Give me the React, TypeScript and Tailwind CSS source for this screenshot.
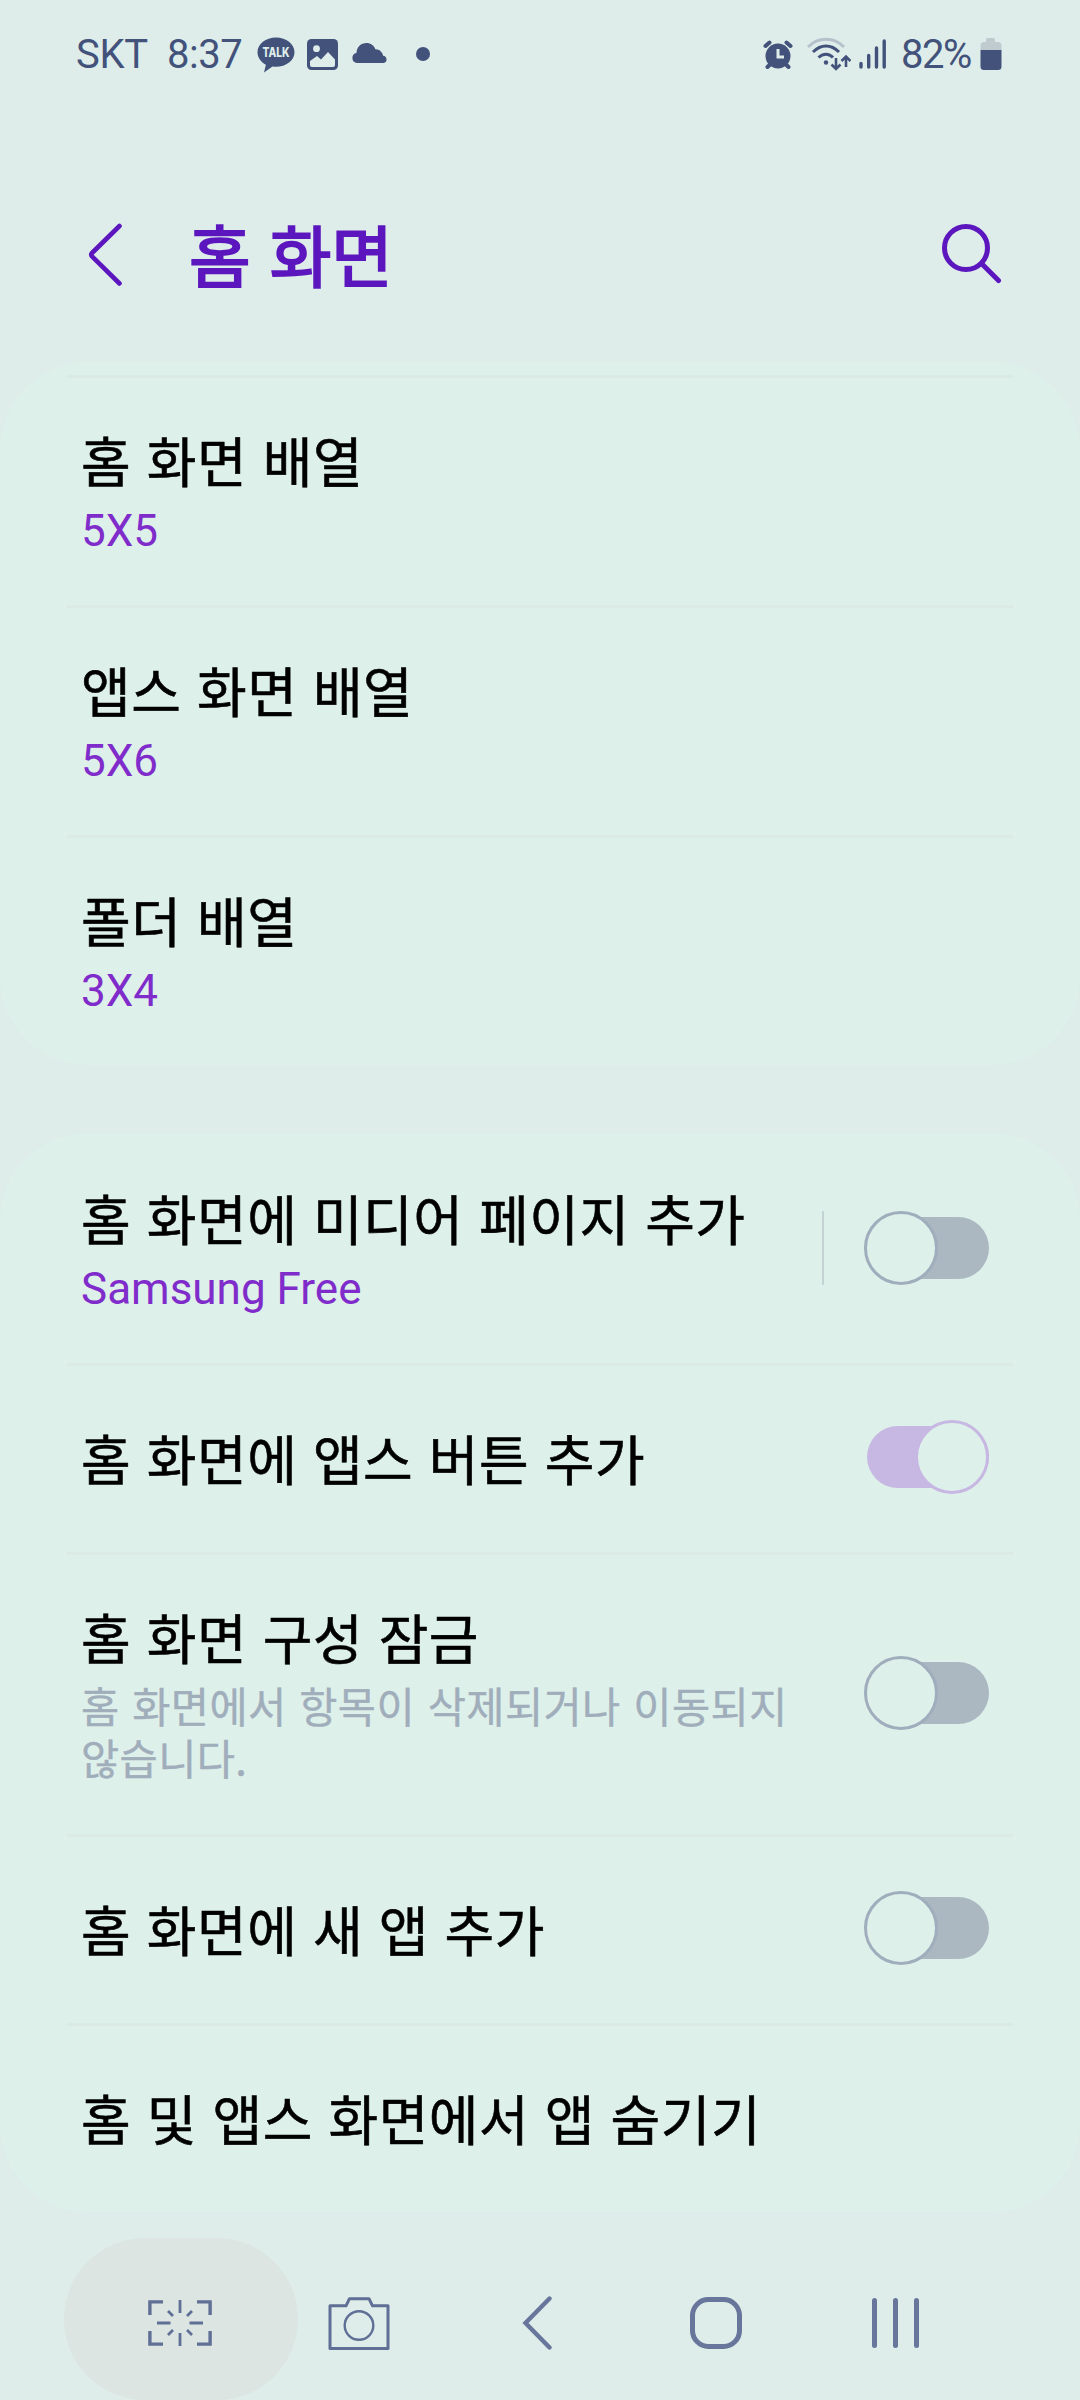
import type { ReactNode } from "react";

function StatusBar() {
  return (
    <div className="flex h-[108px] items-center pl-[76px] pr-[78px] font-['Roboto'] text-[40px] leading-[40px] font-normal text-[#42527a]">
      <span className="mt-[2px] w-[91px] whitespace-nowrap tracking-[-0.3px]">SKT</span>
      <span className="mt-[2px] w-[90px] whitespace-nowrap tracking-[-0.5px]">8:37</span>
      <svg className="mt-[1px] h-[36px] w-[38px]" viewBox="0 0 38 36">
        <path
          d="M19 0.5C8.800 .5.500 7 .5 15.200c0 5.300 3.500 9.900 8.400 12.500L7 35.500l8.500-6c1.100.2 2.300.3 3.500.3 10.200 0 18.500-6.500 18.500-14.600S29.200.5 19 .5z"
          fill="#42527a"
        />
        <text x="19" y="20.300" textAnchor="middle" fontFamily="Inter" fontWeight="800" fontSize="12.500" textLength="27" lengthAdjust="spacingAndGlyphs" fill="#deedea">
          TALK
        </text>
      </svg>
      <svg className="ml-[12px] h-[31px] w-[31px]" viewBox="0 0 31 31">
        <rect width="31" height="31" rx="4.500" fill="#42527a" />
        <circle cx="9.500" cy="9.700" r="3.400" fill="#deedea" />
        <path d="M3 22l7-5 4 3.500 7-7.500 7 7.500V26a2 2 0 0 1-2 2H5a2 2 0 0 1-2-2z" fill="#deedea" />
      </svg>
      <svg className="ml-[14px] mt-[-3px] h-[20px] w-[36px]" viewBox="0 0 36 20">
        <path d="M5 20a5 5 0 0 1-.5-9.900C4.500 4 9 0 14.500 0c4.200 0 7.400 2.300 8.800 6.200 4-.2 7.200 2.800 7.800 6.600A3.700 3.700 0 0 1 32 20z" fill="#42527a" />
      </svg>
      <span className="ml-[28px] h-[14px] w-[14px] rounded-full bg-[#42527a]" />
      <svg className="ml-auto h-[29px] w-[30px]" viewBox="0 0 30 29">
        <g stroke="#42527a" strokeWidth="4" strokeLinecap="round">
          <path d="M2.500 6l4-3.500M27.500 6l-4-3.500M4.500 27l3-3M25.500 27l-3-3" />
        </g>
        <circle cx="15" cy="16" r="12.500" fill="#42527a" />
        <path d="M15 9v8h6" fill="none" stroke="#deedea" strokeWidth="3" />
      </svg>
      <svg className="ml-[14px] h-[34px] w-[44px]" viewBox="0 0 44 34">
        <g fill="none" strokeWidth="3">
          <path d="M1 10C11 -.5 27 -.5 37 10" stroke="#b5c1cb" />
          <path d="M6 15C14 7 24 7 32 15" stroke="#42527a" />
          <path d="M11.500 20.500C16 16 22 16 26 20.500" stroke="#42527a" />
          <path d="M29 21v10M24.500 27.500l4.500 4.500 4.500-4.500M39 30V20M34.500 24l4.500-4.500 4.500 4.500" stroke="#42527a" strokeWidth="2.600" />
        </g>
        <circle cx="19" cy="25.500" r="2.200" fill="#42527a" />
      </svg>
      <svg className="ml-[8px] h-[30px] w-[28px]" viewBox="0 0 28 30">
        <path d="M2 24.500V28M9.700 16.500V28M17.500 9V28M25.200 2V28" stroke="#42527a" strokeWidth="3.400" strokeLinecap="round" />
      </svg>
      <span className="mt-[2px] ml-[14px] w-[73px] whitespace-nowrap tracking-[-1.500px]">82%</span>
      <svg className="ml-[6px] h-[32px] w-[22px]" viewBox="0 0 22 32">
        <path d="M6 1.500A1.500 1.500 0 0 1 7.500 0h6A1.500 1.500 0 0 1 15 1.500V4h3a3.500 3.500 0 0 1 3.500 3.500V12h-21V7.500A3.500 3.500 0 0 1 4 4h2z" fill="#c0cbd0" />
        <path d="M.5 12h21v16.500a3.500 3.500 0 0 1-3.500 3.500H4a3.500 3.500 0 0 1-3.500-3.500z" fill="#42527a" />
      </svg>
    </div>
  );
}

function Header() {
  return (
    <header className="flex h-[254px] items-start pl-[87px] pr-[78px] pt-[100px]">
      <svg className="mt-[14px] h-[66px] w-[36px]" viewBox="0 0 36 66">
        <path d="M32.500 4L5 31q-1.500 1.700 0 3.400L32.500 61.500" fill="none" stroke="#5c16be" strokeWidth="4.600" strokeLinecap="round" strokeLinejoin="round" />
      </svg>
      <h1 className="ml-[66px] text-[67px] leading-[90px] font-normal text-[#5c16be] [word-spacing:4px] [-webkit-text-stroke:2px_#5c16be]">
        홈 화면
      </h1>
      <svg className="ml-auto mt-[14px] h-[62px] w-[62px]" viewBox="0 0 62 62">
        <circle cx="26" cy="26" r="21.500" fill="none" stroke="#5c16be" strokeWidth="5" />
        <path d="M42 42L58.500 58.500" stroke="#5c16be" strokeWidth="5" strokeLinecap="round" />
      </svg>
    </header>
  );
}

function Toggle({ on = false }: { on?: boolean }) {
  return on ? (
    <div role="switch" aria-checked="true" className="mb-[4px] flex h-[62px] w-[122px] shrink-0 items-center justify-end rounded-full bg-[#c7b7e3]">
      <span className="h-[74px] w-[74px] shrink-0 rounded-full border-[3px] border-[#c7b7e3] bg-[#def0ea]" />
    </div>
  ) : (
    <div role="switch" aria-checked="false" className="mb-[4px] flex h-[62px] w-[122px] shrink-0 items-center rounded-full bg-[#abb7c1]">
      <span className="ml-[-3px] h-[74px] w-[74px] shrink-0 rounded-full border-[3px] border-[#9fadbc] bg-[#def0ea]" />
    </div>
  );
}

function Divider() {
  return <div className="ml-[67px] h-[3px] w-[946px] bg-[#dceae5]" />;
}

type RowProps = { title: string; value?: string; note?: ReactNode; height: string; children?: ReactNode };

function Row({ title, value, note, height, children }: RowProps) {
  return (
    <div className={`flex items-center pl-[81px] pr-[91px] ${height}`}>
      <div className={`min-w-0 flex-1 whitespace-nowrap ${note ? "pb-[6px]" : value ? "pb-[2px]" : "pb-[3px]"}`}>
        <div className="text-[54px] leading-[74px] tracking-[0.5px] text-black [word-spacing:3px] [-webkit-text-stroke:0.6px_#000]">{title}</div>
        {value && <div className="mt-[6px] font-['Roboto'] text-[44px] leading-[56px] text-[#802ccb]">{value}</div>}
        {note && (
          <div className="mt-[5px] text-[41.500px] leading-[52px] tracking-[0.4px] text-[#a0adbb] [word-spacing:3px] [-webkit-text-stroke:0.4px_#a0adbb]">
            {note}
          </div>
        )}
      </div>
      {children}
    </div>
  );
}

function NavBar() {
  return (
    <nav className="mt-[26px] ml-[90px] grid h-[162px] w-[895px] grid-cols-5">
      <div className="relative flex justify-center">
        <span className="absolute top-0 left-[-26px] h-[162px] w-[234px] rounded-full bg-[#dce5e1]" />
        <svg className="relative mt-[61px] h-[48px] w-[64px]" viewBox="0 0 64 48" fill="none" stroke="#5f6f95">
          <path d="M1.900 16V2.900H15M49 2.900H62.100V16M62.100 32V45.100H49M15 45.100H1.900V32" strokeWidth="3.400" />
          <path d="M32 1v13M32 34v13M9 24h13.500M41.500 24H55M20 12l5 5M44 12l-5 5M20 36l5-5M44 36l-5-5" strokeWidth="2.800" />
        </svg>
      </div>
      <div className="flex justify-center">
        <svg className="mt-[59px] h-[54px] w-[62px]" viewBox="0 0 62 54" fill="none" stroke="#5f6f95" strokeWidth="3">
          <path d="M2 8.800H18L21.500 1.700H41L44.500 8.800H60V51.500H2z" strokeLinejoin="round" />
          <circle cx="31" cy="28.500" r="14.300" strokeWidth="2.400" />
        </svg>
      </div>
      <div className="flex justify-center pr-[1px]">
        <svg className="mt-[58px] h-[54px] w-[30px]" viewBox="0 0 30 54">
          <path d="M27.500 2.500L3.500 27L27.500 51.500" fill="none" stroke="#67769a" strokeWidth="4.400" strokeLinecap="round" />
        </svg>
      </div>
      <div className="flex justify-center pr-[1px]">
        <svg className="mt-[59px] h-[52px] w-[52px]" viewBox="0 0 52 52">
          <rect x="2.500" y="2.500" width="47" height="47" rx="16" fill="none" stroke="#67769a" strokeWidth="5" />
        </svg>
      </div>
      <div className="flex justify-center gap-4 pt-[60px]">
        <span className="h-[50px] w-[5px] rounded-full bg-[#67769a]" />
        <span className="h-[50px] w-[5px] rounded-full bg-[#67769a]" />
        <span className="h-[50px] w-[5px] rounded-full bg-[#67769a]" />
      </div>
    </nav>
  );
}

export default function App() {
  return (
    <div className="h-[2400px] w-[1080px] overflow-hidden bg-[#deedea] font-['Noto_Sans_CJK_KR',sans-serif]">
      <StatusBar />
      <Header />
      <section className="h-[703px] rounded-[88px] bg-[#def0ea] pt-[13px]">
        <Divider />
        <Row title="홈 화면 배열" value="5X5" height="h-[227px]" />
        <Divider />
        <Row title="앱스 화면 배열" value="5X6" height="h-[227px]" />
        <Divider />
        <Row title="폴더 배열" value="3X4" height="h-[227px]" />
      </section>
      <section className="mt-[68px] h-[1079px] rounded-[88px] bg-[#def0ea] pt-[3px]">
        <Row title="홈 화면에 미디어 페이지 추가" value="Samsung Free" height="h-[227px]">
          <span className="mr-[43px] mb-[4px] h-[74px] w-[2px] bg-[#c4d2d3]" />
          <Toggle />
        </Row>
        <Divider />
        <Row title="홈 화면에 앱스 버튼 추가" height="h-[186px]">
          <Toggle on />
        </Row>
        <Divider />
        <Row
          title="홈 화면 구성 잠금"
          note={
            <>
              홈 화면에서 항목이 삭제되거나 이동되지
              <br />
              않습니다.
            </>
          }
          height="h-[279px]"
        >
          <Toggle />
        </Row>
        <Divider />
        <Row title="홈 화면에 새 앱 추가" height="h-[186px]">
          <Toggle />
        </Row>
        <Divider />
        <Row title="홈 및 앱스 화면에서 앱 숨기기" height="h-[186px]" />
      </section>
      <NavBar />
    </div>
  );
}
